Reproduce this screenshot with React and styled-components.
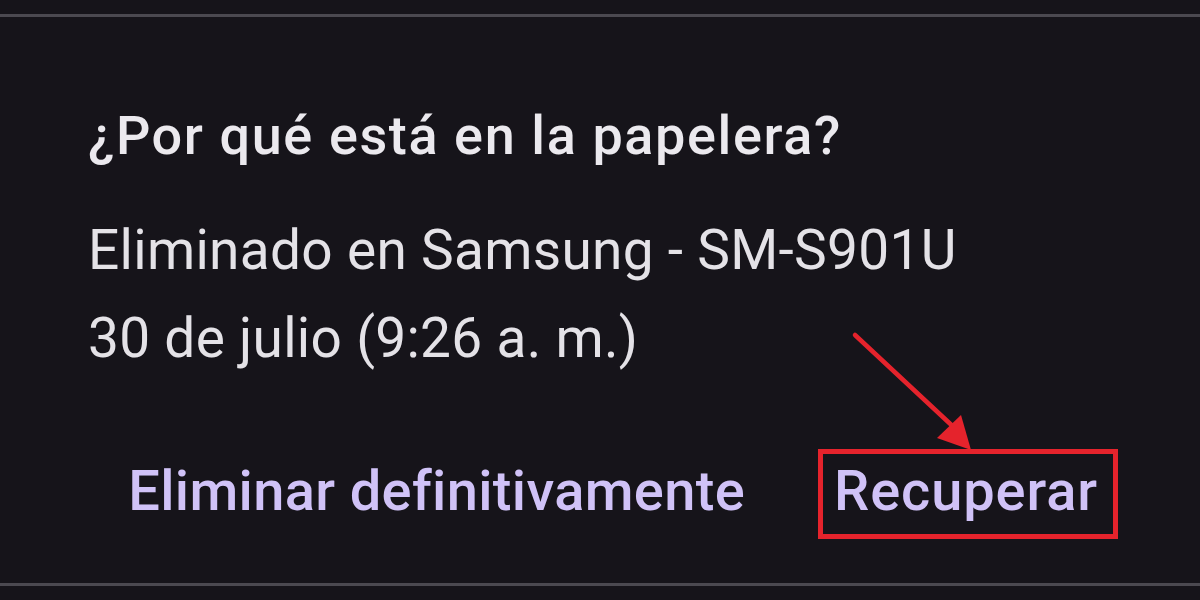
import styled, { createGlobalStyle } from "styled-components";

const GlobalStyle = createGlobalStyle`
  html, body {
    margin: 0;
    padding: 0;
    background: #16141a;
  }
  body {
    font-family: Roboto, "Liberation Sans", sans-serif;
    -webkit-font-smoothing: antialiased;
  }
`;

const Page = styled.div`
  width: 1200px;
  height: 600px;
  padding-top: 14px;
  box-sizing: border-box;
  background: #16141a;
  overflow: hidden;
`;

const Card = styled.section`
  border-top: 3px solid #4b4950;
  border-bottom: 3px solid #4b4950;
  padding: 92px 88px 44px;
  display: flex;
  flex-direction: column;
`;

const Title = styled.h2`
  margin: 0;
  font-size: 54px;
  line-height: 1;
  font-weight: 500;
  letter-spacing: 1.6px;
  color: #ebe9ee;
`;

const Details = styled.div`
  margin-top: 43px;
  display: flex;
  flex-direction: column;
`;

const Line = styled.p`
  margin: 0;
  font-size: 55px;
  line-height: 88px;
  font-weight: 400;
  letter-spacing: 0.3px;
  color: #e4e2e7;
`;

const Actions = styled.div`
  margin-top: 67px;
  margin-right: -6px;
  display: flex;
  justify-content: flex-end;
  gap: 57px;
`;

const ActionButton = styled.button`
  position: relative;
  height: 90px;
  padding: 0 ${(p) => (p.$highlight ? "20px" : "16px")} 6px 16px;
  border: none;
  background: transparent;
  font-family: inherit;
  font-size: 56px;
  font-weight: 500;
  line-height: 84px;
  letter-spacing: ${(p) => (p.$highlight ? "0.9px" : "0.35px")};
  color: #d0c2f7;
  cursor: pointer;
  box-shadow: ${(p) => (p.$highlight ? "inset 0 0 0 5px #e5232c" : "none")};
`;

const Arrow = styled.svg`
  position: absolute;
  left: 30px;
  top: -120px;
  overflow: visible;
  pointer-events: none;
`;

export default function App() {
  return (
    <>
      <GlobalStyle />
      <Page>
        <Card>
          <Title>¿Por qué está en la papelera?</Title>
          <Details>
            <Line>Eliminado en Samsung - SM-S901U</Line>
            <Line>30 de julio (9:26 a. m.)</Line>
          </Details>
          <Actions>
            <ActionButton>Eliminar definitivamente</ActionButton>
            <ActionButton $highlight>
              Recuperar
              <Arrow width="140" height="125" viewBox="0 0 140 125">
                <line
                  x1="7"
                  y1="6"
                  x2="112"
                  y2="104"
                  stroke="#e5232c"
                  strokeWidth="4.5"
                  strokeLinecap="round"
                />
                <polygon points="123,121 89,109 113,86" fill="#e5232c" />
              </Arrow>
            </ActionButton>
          </Actions>
        </Card>
      </Page>
    </>
  );
}
